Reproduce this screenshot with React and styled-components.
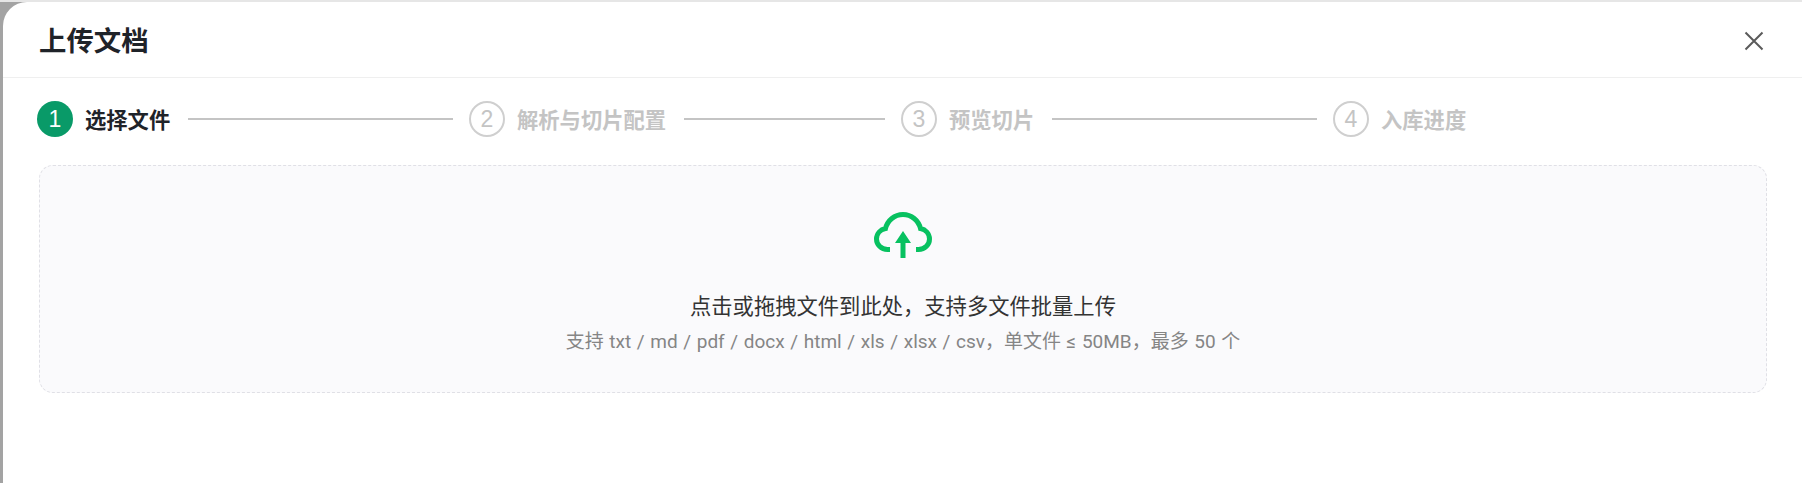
import React from 'react';
import styled, { createGlobalStyle } from 'styled-components';

const GlobalStyle = createGlobalStyle`
  html, body {
    margin: 0;
    padding: 0;
    height: 100%;
    overflow: hidden;
    background: #a3a3a3;
  }
  #root {
    height: 100%;
  }
`;

const FONT = `Roboto, "Noto Sans CJK SC", sans-serif`;

const Page = styled.div`
  height: 483px;
  box-sizing: border-box;
  padding: 2px 0 0 3px;
  background: linear-gradient(#e6e6e6 0 2px, #a3a3a3 2px);
  font-family: ${FONT};
`;

const Modal = styled.div`
  height: 100%;
  background: #fff;
  border-top-left-radius: 24px;
`;

const Header = styled.header`
  height: 76px;
  box-sizing: border-box;
  padding: 2px 38px 0 36px;
  display: flex;
  align-items: center;
  justify-content: space-between;
  border-bottom: 1px solid #efefef;
`;

const Title = styled.h2`
  margin: 0;
  padding-top: 2px;
  font-size: 27.4px;
  line-height: 36px;
  font-weight: 700;
  color: #1f2329;
`;

const CloseButton = styled.button`
  width: 20px;
  height: 20px;
  padding: 0;
  border: 0;
  background: none;
  display: flex;
  color: #5a5a5a;
`;

const Steps = styled.div`
  display: flex;
  padding: 23px 0 0 34px;
`;

const Step = styled.div`
  flex: ${p => (p.$last ? 'none' : '0 0 432px')};
  display: flex;
  align-items: center;
`;

const StepCircle = styled.span`
  width: 36px;
  height: 36px;
  box-sizing: border-box;
  border-radius: 50%;
  display: flex;
  align-items: center;
  justify-content: center;
  font-family: "Liberation Sans", sans-serif;
  font-size: 23px;
  background: ${p => (p.$active ? '#099a68' : '#fff')};
  color: ${p => (p.$active ? '#fff' : '#c4c4c4')};
  border: ${p => (p.$active ? '0' : '2px solid #cfcfcf')};
`;

const StepLabel = styled.span`
  margin-left: 12px;
  padding-top: 3px;
  font-size: 21.3px;
  line-height: 33px;
  font-weight: 700;
  white-space: nowrap;
  color: ${p => (p.$active ? '#1f2329' : '#c4c4c4')};
`;

const StepLine = styled.span`
  flex: 1;
  height: 2px;
  margin: 0 16px 0 18px;
  background: #c4c4c4;
`;

const Dropzone = styled.div`
  height: 228px;
  box-sizing: border-box;
  margin: 28px 35px 0 36px;
  padding-top: 46px;
  display: flex;
  flex-direction: column;
  align-items: center;
  background: #fafafc;
  border: 1px dashed #e0e0e6;
  border-radius: 14px;
`;

const UploadIcon = styled.svg`
  display: block;
  color: #07c160;
`;

const DropText = styled.p`
  margin: 33px 0 0;
  font-size: 21.3px;
  line-height: 32px;
  color: #333;
`;

const DropHint = styled.p`
  margin: 2px 0 0;
  font-size: 19px;
  line-height: 34px;
  word-spacing: 0.9px;
  color: #858585;
`;

const STEPS = ['选择文件', '解析与切片配置', '预览切片', '入库进度'];

const App = () => {
  return (
    <Page>
      <GlobalStyle />
      <Modal>
        <Header>
          <Title>上传文档</Title>
          <CloseButton aria-label="关闭">
            <svg width="20" height="20" viewBox="0 0 20 20" fill="none" stroke="currentColor" strokeWidth="2">
              <path d="M1.5 1.5 18.5 18.5M18.5 1.5 1.5 18.5" />
            </svg>
          </CloseButton>
        </Header>
        <Steps>
          {STEPS.map((label, i) => {
            const last = i === STEPS.length - 1;
            return (
              <Step key={label} $last={last}>
                <StepCircle $active={i === 0}>{i + 1}</StepCircle>
                <StepLabel $active={i === 0}>{label}</StepLabel>
                {!last && <StepLine />}
              </Step>
            );
          })}
        </Steps>
        <Dropzone>
          <UploadIcon width="58" height="46" viewBox="0 0 58 46" fill="none">
            <path
              d="M16 37.5H13.5C7 37.5 2.5 32.5 2.5 27C2.5 21.5 6.5 17.5 11.5 16.5C13.5 8.5 20.5 2.5 29 2.5C37.5 2.5 44.5 8.5 46.5 16.5C51.5 17.5 55.5 21.5 55.5 27C55.5 32.5 51 37.5 44.5 37.5H42"
              stroke="currentColor"
              strokeWidth="5"
            />
            <path d="M29 19 37 31H31.5V46H26.5V31H21Z" fill="currentColor" />
          </UploadIcon>
          <DropText>点击或拖拽文件到此处，支持多文件批量上传</DropText>
          <DropHint>支持 txt / md / pdf / docx / html / xls / xlsx / csv，单文件 ≤ 50MB，最多 50 个</DropHint>
        </Dropzone>
      </Modal>
    </Page>
  );
};

export default App;
